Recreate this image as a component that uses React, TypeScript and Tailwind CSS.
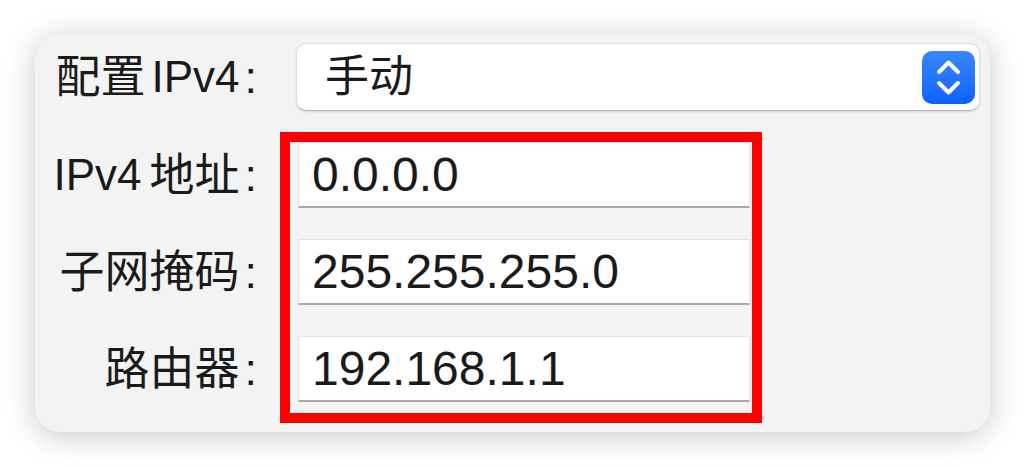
const font = { fontFamily: '"Liberation Sans", "Noto Sans CJK SC", sans-serif' };

function Stepper() {
  return (
    <div className="flex h-[53px] w-[53px] items-center justify-center rounded-[10px] bg-gradient-to-b from-[#3a86ff] to-[#0a62ff]">
      <svg width="53" height="53" viewBox="0 0 53 53" fill="none">
        <path d="M17 21 L26.5 11.5 L36 21" stroke="white" strokeWidth="4" strokeLinecap="round" strokeLinejoin="round" />
        <path d="M17 32 L26.5 41.5 L36 32" stroke="white" strokeWidth="4" strokeLinecap="round" strokeLinejoin="round" />
      </svg>
    </div>
  );
}

function Label({ children }: { children: React.ReactNode }) {
  return (
    <div className="flex h-[66px] items-center justify-end text-[45px] leading-none text-[#1a1a1a]">
      {children}
      <span className="ml-[5px]">:</span>
    </div>
  );
}

function Field({ value }: { value: string }) {
  return (
    <div className="flex h-[66px] items-center border border-b-2 border-[#e2e2e2] border-b-[#a8a8a8] bg-white pl-[13px] text-[48px] leading-none text-[#1a1a1a]">
      {value}
    </div>
  );
}

export default function App() {
  return (
    <div className="h-[466px] w-[1024px] bg-white pl-[35px] pt-[34px]" style={font}>
      <div className="h-[398px] w-[955px] rounded-[25px] bg-[#f3f3f3] pt-[9px] shadow-[0_4px_30px_rgba(0,0,0,0.22)]">
        <div className="flex items-center">
          <div className="flex w-[222px] justify-end text-[45px] leading-none text-[#1a1a1a]">
            配置<span className="ml-[6px] text-[44px]">IPv4</span>
            <span className="ml-[5px]">:</span>
          </div>
          <div className="ml-[39px] mr-[10px] flex h-[68px] flex-1 items-center justify-between rounded-[10px] border border-[#dedede] border-b-[#b4b4b4] bg-white pl-[28px] pr-[4px] shadow-[0_1px_2px_rgba(0,0,0,0.12)]">
            <span className="text-[44px] leading-none text-[#1a1a1a]">手动</span>
            <Stepper />
          </div>
        </div>

        <div className="mt-[21px] flex">
          <div className="flex w-[222px] flex-col gap-[31px] pt-[10px]">
            <Label>
              <span className="text-[44px]">IPv4</span>
              <span className="ml-[8px]">地址</span>
            </Label>
            <Label>子网掩码</Label>
            <Label>路由器</Label>
          </div>
          <div className="ml-[23px] flex w-[482px] flex-col gap-[31px] border-[10px] border-[#ff0000] pb-[11px] pl-[8px] pr-[2px]">
            <Field value="0.0.0.0" />
            <Field value="255.255.255.0" />
            <Field value="192.168.1.1" />
          </div>
        </div>
      </div>
    </div>
  );
}
